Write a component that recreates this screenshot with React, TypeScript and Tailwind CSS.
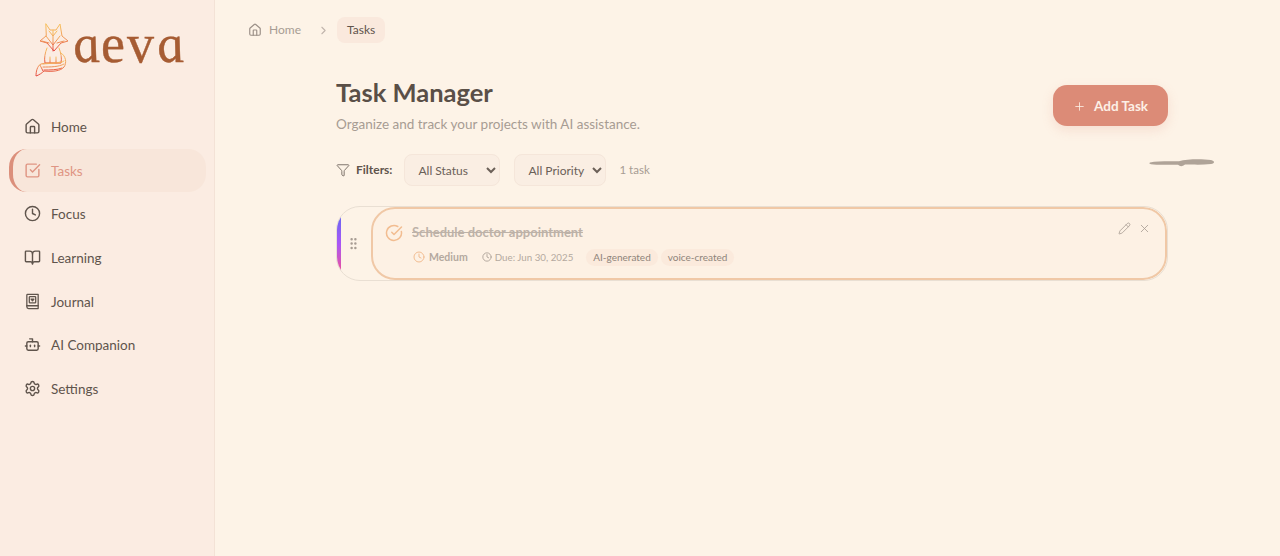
import { BookOpen, Bot, ChevronRight, CircleCheckBig, Clock, Funnel, GripVertical, House, Pencil, Plus, Settings, SquareCheckBig, X } from "lucide-react";
import type { ReactNode } from "react";

const JournalIcon = ({ size = 18 }: { size?: number }) => (
  <svg width={size} height={size} viewBox="0 0 24 24" fill="none" stroke="currentColor" strokeWidth="1.8" strokeLinecap="round" strokeLinejoin="round">
    <path d="M4 19.5V3a1 1 0 0 1 1-1h15v20H6.5A2.5 2.5 0 0 1 4 19.5z" />
    <path d="M4 18h16" />
    <rect x="7.5" y="5" width="9" height="9" rx="1" />
    <path d="M10 8.5h4L12 11z" />
  </svg>
);

const FoxLogo = () => (
  <svg width="38" height="54" viewBox="0 0 38 54" fill="none" strokeWidth="1" strokeLinejoin="round" strokeLinecap="round">
    <defs>
      <linearGradient id="fox" x1="0" y1="0" x2="0" y2="1">
        <stop offset="0" stopColor="#f7c25c" />
        <stop offset="0.5" stopColor="#f09a5a" />
        <stop offset="1" stopColor="#e4453f" />
      </linearGradient>
    </defs>
    <g stroke="url(#fox)">
      <path d="M12 1l4 6h6l4-6 2 12 6 5-7 2-7 8-7-8-7-2 6-5z" />
      <path d="M19 7v21M12 13l7 9 7-9M8 18l7 2M30 18l-7 2M15 8l4 5 4-5" />
      <path d="M13 25c-2 5-3 10-2 15h16c1-5 0-10-2-15" />
      <path d="M16 34v6M22 34v6" />
      <path d="M27 30c5 3 6 10 3 14-3 4-12 5-20 4-2 2-5 4-8 5 0-4 1-10 5-12 5-2 15 0 20-2" />
      <path d="M30 38c-4 3-14 2-21 3M30 41c-5 3-14 3-21 3M28 45c-5 2-12 2-18 2M6 42l3 6" />
    </g>
  </svg>
);

const NavItem = ({ icon, label, active }: { icon: ReactNode; label: string; active?: boolean }) => (
  <div className={`flex items-center gap-[10px] h-[43.6px] rounded-[18px] text-[13.5px] ${active ? "ml-[9px] mr-2 pl-[11px] border-l-[4px] border-[#db8f7b] bg-[#f8e6da] text-[#df9583]" : "ml-[9px] mr-2 pl-[15px] text-[#5f544c]"}`}>
    <span className="w-[17px] flex justify-center">{icon}</span>
    <span className="pt-px">{label}</span>
  </div>
);

export default function App() {
  return (
    <div className="flex h-[556px] overflow-hidden bg-[#fdf3e7] font-['Lato','Open_Sans',sans-serif]">
      {/* Sidebar */}
      <aside className="w-[215px] shrink-0 bg-[#fbece2] border-r border-[#f3e2d6]">
        <div className="flex items-start h-[105px] pl-[34px] pt-[23px]">
          <FoxLogo />
          <span className="ml-0 -mt-[14px] text-[54px] leading-[70px] tracking-[2px] text-[#a65c33] font-['Liberation_Serif',serif] [-webkit-text-stroke:0.4px_#a65c33]">
            <span className="inline-block italic skew-x-12">a</span>ev<span className="inline-block italic skew-x-12">a</span>
          </span>
        </div>
        <nav className="flex flex-col">
          <NavItem icon={<House size={17} />} label="Home" />
          <NavItem active icon={<SquareCheckBig size={17} />} label="Tasks" />
          <NavItem icon={<Clock size={17} />} label="Focus" />
          <NavItem icon={<BookOpen size={17} />} label="Learning" />
          <NavItem icon={<JournalIcon size={17} />} label="Journal" />
          <NavItem icon={<Bot size={17} />} label="AI Companion" />
          <NavItem icon={<Settings size={17} />} label="Settings" />
        </nav>
      </aside>

      {/* Main */}
      <main className="flex-1 min-w-0 relative">
        <div className="flex items-center h-[26px] mt-[17px] ml-[33px] text-[12px]">
          <House size={14} className="text-[#9b9088]" />
          <span className="ml-[7px] text-[#a79c93]">Home</span>
          <ChevronRight size={13} className="ml-[16px] text-[#c0b5ac]" />
          <span className="ml-[7px] flex items-center h-[26px] px-[10px] rounded-lg bg-[#fae9dd] text-[#5f544c]">Tasks</span>
        </div>

        <div className="ml-[121px] w-[832px] mt-[33px]">
          <div className="flex justify-between items-start">
            <div>
              <h1 className="text-[25.5px] leading-[32px] font-bold text-[#5a4f47]">Task Manager</h1>
              <p className="mt-[6px] text-[13.5px] leading-[20px] text-[#a79c93]">Organize and track your projects with AI assistance.</p>
            </div>
            <button className="flex items-center gap-2 h-[41px] w-[115px] mt-[9px] pl-[20px] pt-px rounded-[14px] bg-[#dc8b77] text-[13.5px] font-bold text-[#fdf0e6] shadow-[0_4px_12px_rgba(220,139,119,0.2)]">
              <Plus size={13} strokeWidth={1.5} />
              Add Task
            </button>
          </div>

          <div className="flex items-center mt-[20px] h-[32px] text-[12px]">
            <Funnel size={14} strokeWidth={1.5} className="text-[#6e635b]" />
            <span className="ml-[6px] font-bold text-[#5f544c]">Filters:</span>
            <select defaultValue="all" className="ml-[12px] w-[96px] h-[32px] pl-[9px] rounded-lg border border-[#f5e6da] bg-[#faeee3] text-[#6b6058]">
              <option value="all">All Status</option>
            </select>
            <select defaultValue="all" className="ml-[14px] w-[92px] h-[32px] pl-[9px] rounded-lg border border-[#f5e6da] bg-[#faeee3] text-[#6b6058]">
              <option value="all">All Priority</option>
            </select>
            <span className="ml-[13px] text-[11.5px] text-[#a79c93]">1 task</span>
          </div>

          {/* Task card */}
          <div className="relative flex mt-[20px] h-[75px] rounded-[24px] border border-[#e9dfd3] overflow-hidden">
            <div className="w-[4px] my-[8px] bg-gradient-to-b from-[#6366f1] via-[#a855f7] to-[#ec4899]" />
            <div className="flex items-center justify-center w-[25px] text-[#a79c93]">
              <GripVertical size={15} />
            </div>
            <div className="relative flex-1 ml-[5px] rounded-[24px] border-2 border-[#f0c8a6] bg-[#fdf1e4] pl-[12px] pt-[14px]">
              <div className="flex items-center gap-[9px]">
                <CircleCheckBig size={18} className="text-[#f2bd91]" />
                <span className="text-[13px] font-bold text-[#bdb2a8] line-through">Schedule doctor appointment</span>
              </div>
              <div className="flex items-center mt-[6px] ml-[28px] text-[10px] text-[#b4a99f]">
                <Clock size={12} className="text-[#f2bd91]" />
                <span className="ml-[4px] pt-px text-[10.5px] font-bold">Medium</span>
                <Clock size={10} className="ml-[14px] text-[#a79c93]" />
                <span className="ml-[3px] text-[9.75px]">Due: Jun 30, 2025</span>
                <span className="ml-[13px] px-[7px] h-[17px] flex items-center rounded-full bg-[#fbeadc] text-[#8f847a]">AI-generated</span>
                <span className="ml-[3px] px-[7px] h-[17px] flex items-center rounded-full bg-[#fbeadc] text-[#8f847a]">voice-created</span>
              </div>
              <div className="absolute top-[13px] right-[14px] flex items-center gap-[7px] text-[#a79c93]">
                <Pencil size={13} strokeWidth={1.5} />
                <X size={13} strokeWidth={1.5} />
              </div>
            </div>
          </div>
        </div>

        {/* stray smudge */}
        <svg className="absolute left-[934px] top-[158px]" width="66" height="10" viewBox="0 0 66 10">
          <path d="M1 4.5C8 2.8 20 3.4 30 3.2 38 1 52 .8 62 2c4 1 4 3.4 0 4C52 7.2 42 6.4 36 6.6c-3 2.2-5 1.8-7 .2C20 6.6 8 7 2 6.2 0 5.8 0 5 1 4.5z" fill="#afa398" />
        </svg>
      </main>
    </div>
  );
}
